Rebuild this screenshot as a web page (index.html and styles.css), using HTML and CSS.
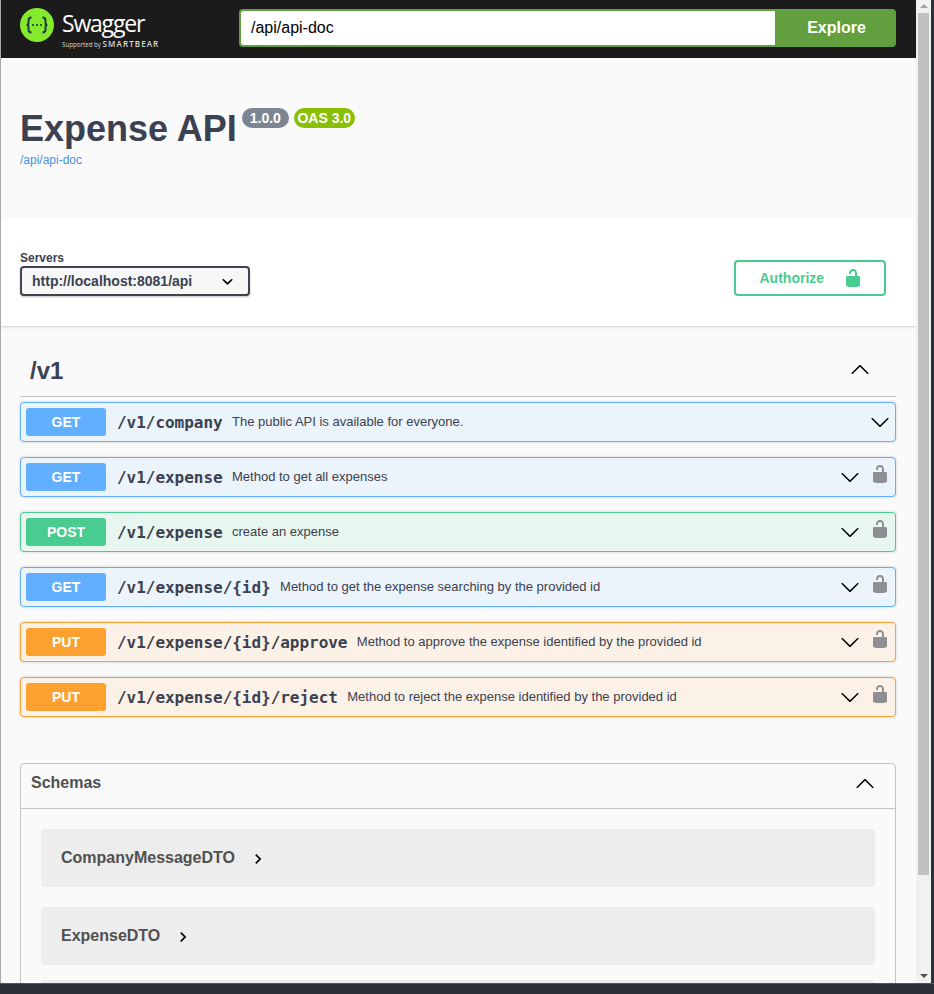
FILE: index.html
```html
<!DOCTYPE html>
<html lang="en">
<head>
<meta charset="UTF-8">
<title>Swagger UI</title>
<link rel="stylesheet" href="styles.css">
</head>
<body>

<svg class="icon-defs" width="0" height="0">
  <symbol id="arrow-down" viewBox="0 0 20 20"><path d="M17.418 6.109c.272-.268.709-.268.979 0s.271.701 0 .969l-7.908 7.83c-.27.268-.707.268-.979 0l-7.908-7.83c-.27-.268-.27-.701 0-.969.271-.268.709-.268.979 0L10 13.25l7.418-7.141z"/></symbol>
  <symbol id="arrow-up" viewBox="0 0 20 20"><path d="M17.418 13.891c.272.268.709.268.979 0s.271-.701 0-.969l-7.908-7.83c-.27-.268-.707-.268-.979 0l-7.908 7.83c-.27.268-.27.701 0 .969.271.268.709.268.979 0L10 6.75l7.418 7.141z"/></symbol>
  <symbol id="unlocked" viewBox="0 0 20 20"><path d="M15.8 8H14V5.6C14 2.703 12.665 1 10 1 7.334 1 6 2.703 6 5.6V6h2v-.801C8 3.754 8.797 3 10 3c1.203 0 2 .754 2 2.199V8H4c-.553 0-1 .646-1 1.199V17c0 .549.428 1.139.951 1.307l1.197.387C5.672 18.861 6.55 19 7.1 19h5.8c.549 0 1.428-.139 1.951-.307l1.196-.387c.524-.167.953-.757.953-1.306V9.199C17 8.646 16.352 8 15.8 8z"/></symbol>
</svg>

<div class="window">
  <div class="page">

    <!-- Barra superior -->
    <div class="topbar">
      <div class="logo">
        <svg class="logo-mark" width="34" height="34" viewBox="0 0 34 34">
          <circle cx="17" cy="17" r="17" fill="#85ea2d"/>
          <path d="M11.5 9.5c-2.6 0-3 1.2-3 3v2.6c0 1.2-.6 1.9-1.9 1.9 1.3 0 1.9.7 1.9 1.9v2.6c0 1.8.4 3 3 3M22.5 9.5c2.6 0 3 1.2 3 3v2.6c0 1.2.6 1.9 1.9 1.9-1.3 0-1.9.7-1.9 1.9v2.6c0 1.8-.4 3-3 3" fill="none" stroke="#173647" stroke-width="1.9"/>
          <circle cx="13" cy="17" r="1.1" fill="#173647"/>
          <circle cx="17" cy="17" r="1.1" fill="#173647"/>
          <circle cx="21" cy="17" r="1.1" fill="#173647"/>
        </svg>
        <div class="logo-text">
          <span class="logo-name">Swagger</span>
          <span class="logo-sub">Supported by <b>SMARTBEAR</b></span>
        </div>
      </div>
      <form class="explore">
        <input class="explore-input" type="text" value="/api/api-doc">
        <button class="explore-btn" type="button">Explore</button>
      </form>
    </div>

    <!-- Titulo -->
    <div class="info">
      <div class="title-row">
        <h1>Expense API</h1>
        <span class="badge badge-version">1.0.0</span>
        <span class="badge badge-oas">OAS 3.0</span>
      </div>
      <a class="info-link" href="#">/api/api-doc</a>
    </div>

    <!-- Servidores -->
    <div class="servers">
      <div class="servers-col">
        <span class="servers-label">Servers</span>
        <div class="server-select">
          <span>http://localhost:8081/api</span>
          <svg width="11" height="11" viewBox="0 0 20 20"><path d="M13.418 7.859c.271-.268.709-.268.978 0 .27.268.272.701 0 .969l-3.908 3.83c-.27.268-.707.268-.979 0l-3.908-3.83c-.27-.268-.27-.701 0-.969.271-.268.709-.268.978 0L10 11l3.418-3.141z" transform="translate(-10 -10) scale(2)"/></svg>
        </div>
      </div>
      <button class="authorize" type="button">
        <span>Authorize</span>
        <svg width="20" height="20"><use href="#unlocked"/></svg>
      </button>
    </div>

    <!-- Operacoes -->
    <div class="main">
      <div class="tag">
        <h3>/v1</h3>
        <svg width="20" height="20"><use href="#arrow-up"/></svg>
      </div>

      <div class="op op-get">
        <span class="method">GET</span>
        <span class="path">/v1/company</span>
        <span class="desc">The public API is available for everyone.</span>
        <svg class="chevron" width="20" height="20"><use href="#arrow-down"/></svg>
      </div>
      <div class="op op-get">
        <span class="method">GET</span>
        <span class="path">/v1/expense</span>
        <span class="desc">Method to get all expenses</span>
        <svg class="chevron" width="20" height="20"><use href="#arrow-down"/></svg>
        <svg class="lock" width="20" height="20"><use href="#unlocked"/></svg>
      </div>
      <div class="op op-post">
        <span class="method">POST</span>
        <span class="path">/v1/expense</span>
        <span class="desc">create an expense</span>
        <svg class="chevron" width="20" height="20"><use href="#arrow-down"/></svg>
        <svg class="lock" width="20" height="20"><use href="#unlocked"/></svg>
      </div>
      <div class="op op-get">
        <span class="method">GET</span>
        <span class="path">/v1/expense/{id}</span>
        <span class="desc">Method to get the expense searching by the provided id</span>
        <svg class="chevron" width="20" height="20"><use href="#arrow-down"/></svg>
        <svg class="lock" width="20" height="20"><use href="#unlocked"/></svg>
      </div>
      <div class="op op-put">
        <span class="method">PUT</span>
        <span class="path">/v1/expense/{id}/approve</span>
        <span class="desc">Method to approve the expense identified by the provided id</span>
        <svg class="chevron" width="20" height="20"><use href="#arrow-down"/></svg>
        <svg class="lock" width="20" height="20"><use href="#unlocked"/></svg>
      </div>
      <div class="op op-put">
        <span class="method">PUT</span>
        <span class="path">/v1/expense/{id}/reject</span>
        <span class="desc">Method to reject the expense identified by the provided id</span>
        <svg class="chevron" width="20" height="20"><use href="#arrow-down"/></svg>
        <svg class="lock" width="20" height="20"><use href="#unlocked"/></svg>
      </div>

      <!-- Schemas -->
      <div class="schemas">
        <div class="schemas-head">
          <span>Schemas</span>
          <svg width="20" height="20"><use href="#arrow-up"/></svg>
        </div>
        <div class="schemas-body">
          <div class="model"><span>CompanyMessageDTO</span><svg width="20" height="20" viewBox="0 0 24 24"><path d="M10 6 8.6 7.4 13.2 12l-4.6 4.6L10 18l6-6z"/></svg></div>
          <div class="model"><span>ExpenseDTO</span><svg width="20" height="20" viewBox="0 0 24 24"><path d="M10 6 8.6 7.4 13.2 12l-4.6 4.6L10 18l6-6z"/></svg></div>
          <div class="model"></div>
        </div>
      </div>
    </div>
  </div>

  <!-- Barra de rolagem -->
  <div class="scrollbar">
    <span class="scroll-up"></span>
    <div class="scroll-track"><div class="scroll-thumb"></div></div>
    <span class="scroll-down"></span>
  </div>
</div>

<div class="taskbar"></div>

</body>
</html>
```

FILE: styles.css
```css
html, body {
  margin: 0;
  padding: 0;
  height: 100%;
  overflow: hidden;
  background: #2b303b;
  font-family: "Liberation Sans", Arial, sans-serif;
  color: #3b4151;
}
.icon-defs {
  display: block;
  height: 0;
}

/* janela */
.window {
  display: flex;
  box-sizing: border-box;
  height: 983px;
  width: 931px;
  border-left: 1px solid #a9a9a9;
  overflow: hidden;
}
.page {
  width: 915px;
  flex: none;
  overflow: hidden;
  background: #fafafa;
}
.taskbar {
  height: 11px;
  background: #2b303b;
  border-top: 1px solid #555;
  box-sizing: border-box;
}

/* scrollbar */
.scrollbar {
  flex: 1;
  display: flex;
  flex-direction: column;
  align-items: center;
  background: #f1f1f1;
  padding: 0 2px;
}
.scroll-up, .scroll-down {
  flex: none;
  width: 0;
  height: 0;
  border-left: 4px solid transparent;
  border-right: 4px solid transparent;
}
.scroll-up {
  border-bottom: 4px solid #a3a3a3;
  margin: 4px 0 5px;
}
.scroll-down {
  border-top: 4px solid #505050;
  margin: 4px 0 5px;
}
.scroll-track {
  flex: 1;
  width: 100%;
}
.scroll-thumb {
  height: 862px;
  background: #c1c1c1;
}

/* topo */
.topbar {
  height: 58px;
  box-sizing: border-box;
  background: #1b1b1b;
  display: flex;
  align-items: center;
  padding: 0 20px 2px 19px;
}
.logo {
  display: flex;
  align-items: flex-start;
  gap: 8px;
  width: 219px;
  height: 40px;
  flex: none;
  color: #fff;
}
.logo-mark {
  flex: none;
}
.logo-text {
  display: flex;
  flex-direction: column;
  gap: 4px;
  padding-top: 3px;
}
.logo-name {
  font-family: "Open Sans", sans-serif;
  font-size: 23px;
  line-height: 24px;
  letter-spacing: -1.2px;
}
.logo-sub {
  font-family: "Open Sans", sans-serif;
  font-size: 6.2px;
  line-height: 9px;
  color: #d8d8d8;
  white-space: nowrap;
}
.logo-sub b {
  font-size: 8px;
  font-weight: 600;
  letter-spacing: 1.1px;
}
.explore {
  flex: 1;
  display: flex;
  height: 38px;
  margin: 0;
}
.explore-input {
  flex: 1;
  min-width: 0;
  box-sizing: border-box;
  border: 2px solid #62a03f;
  border-right: none;
  border-radius: 4px 0 0 4px;
  padding: 0 10px;
  font: 16px "Liberation Sans", sans-serif;
  color: #000;
  background: #fff;
  outline: none;
}
.explore-btn {
  width: 121px;
  border: none;
  border-radius: 0 4px 4px 0;
  background: #62a03f;
  color: #fff;
  font: bold 16px "Liberation Sans", sans-serif;
  padding: 0 0 0 2px;
}

/* info */
.info {
  height: 160px;
  box-sizing: border-box;
  padding: 51px 19px 0;
}
.title-row {
  display: flex;
  align-items: flex-start;
}
h1 {
  margin: 0;
  font-size: 36px;
  line-height: 40px;
  font-weight: bold;
  color: #3b4151;
}
.badge {
  margin-top: -1px;
  height: 20px;
  line-height: 20px;
  border-radius: 57px;
  font-size: 14px;
  font-weight: bold;
  color: #fff;
  padding: 0 3.5px;
  box-sizing: border-box;
}
.badge-version {
  background: #7d8492;
  margin-left: 5px;
  padding: 0 8px;
}
.badge-oas {
  background: #89bf04;
  margin-left: 5px;
}
.info-link {
  display: block;
  font-size: 12px;
  line-height: 15px;
  color: #4990e2;
  text-decoration: none;
  margin-top: 4px;
}

/* servers */
.servers {
  height: 109px;
  box-sizing: border-box;
  background: #fff;
  border-bottom: 1px solid #ddd;
  box-shadow: 0 1px 2px rgba(0, 0, 0, 0.08);
  display: flex;
  justify-content: space-between;
  padding: 33px 30px 0 19px;
}
.servers-label {
  display: block;
  font-size: 12px;
  line-height: 14px;
  font-weight: bold;
}
.server-select {
  box-sizing: border-box;
  width: 230px;
  height: 30px;
  margin-top: 1px;
  display: flex;
  align-items: center;
  justify-content: space-between;
  padding: 0 15px 0 10px;
  border: 2px solid #41444e;
  border-radius: 4px;
  background: #f7f7f7;
  box-shadow: 0 1px 2px rgba(0, 0, 0, 0.25);
  font-size: 14px;
  font-weight: bold;
}
.authorize {
  box-sizing: border-box;
  width: 152px;
  height: 36px;
  margin-top: 9px;
  display: flex;
  align-items: center;
  gap: 19px;
  border: 2px solid #49cc90;
  border-radius: 4px;
  background: transparent;
  color: #49cc90;
  font: bold 14px "Liberation Sans", sans-serif;
  fill: #49cc90;
  padding: 0 0 0 23.5px;
}

/* operacoes */
.main {
  padding: 19px 20px 0 19px;
}
.tag {
  height: 51px;
  box-sizing: border-box;
  display: flex;
  align-items: center;
  justify-content: space-between;
  padding: 0 26px 0 10px;
  border-bottom: 1px solid #c4c4c4;
  margin-bottom: 5px;
}
.tag h3 {
  margin: 0;
  font-size: 24px;
  font-weight: bold;
}
.tag svg {
  margin-bottom: 2px;
}
.op {
  box-sizing: border-box;
  height: 40px;
  margin-bottom: 15px;
  display: flex;
  align-items: center;
  padding: 0 5px;
  border: 1px solid;
  border-radius: 4px;
  box-shadow: 0 0 3px rgba(0, 0, 0, 0.19);
}
.op-get {
  background: #ebf3fb;
  border-color: #61affe;
}
.op-post {
  background: #e8f6f0;
  border-color: #49cc90;
}
.op-put {
  background: #fbf1e6;
  border-color: #fca130;
}
.method {
  flex: none;
  width: 80px;
  height: 28px;
  line-height: 28px;
  text-align: center;
  border-radius: 3px;
  color: #fff;
  font-size: 14px;
  font-weight: bold;
}
.op-get .method { background: #61affe; }
.op-post .method { background: #49cc90; }
.op-put .method { background: #fca130; }
.path {
  font-family: "DejaVu Sans Mono", monospace;
  font-size: 16px;
  font-weight: bold;
  letter-spacing: -0.03px;
  margin-left: 11px;
  white-space: nowrap;
}
.desc {
  font-size: 13px;
  margin: 0 0 2px 9.4px;
  white-space: nowrap;
  flex: 1;
}
.chevron {
  flex: none;
}
.lock {
  flex: none;
  margin: 0 0 6px 10px;
  fill: #8d8f92;
}

/* schemas */
.schemas {
  margin-top: 46px;
  border: 1px solid #c4c4c4;
  border-radius: 4px;
}
.schemas-head {
  height: 45px;
  box-sizing: border-box;
  display: flex;
  align-items: center;
  justify-content: space-between;
  padding: 0 20px 5px 10px;
  border-bottom: 1px solid #c4c4c4;
  font-size: 16px;
  font-weight: bold;
  color: #505050;
}
.schemas-head span {
  margin-bottom: 2px;
}
.schemas-body {
  padding: 20px 20px 0;
}
.model {
  height: 58px;
  box-sizing: border-box;
  margin-bottom: 20px;
  display: flex;
  align-items: center;
  gap: 13px;
  padding: 0 20px;
  background: #ededed;
  border-radius: 4px;
  font-size: 16px;
  font-weight: bold;
  color: #505050;
}
.model svg {
  margin-top: 2px;
}
.model:nth-child(2) {
  margin-bottom: 15px;
}
```
